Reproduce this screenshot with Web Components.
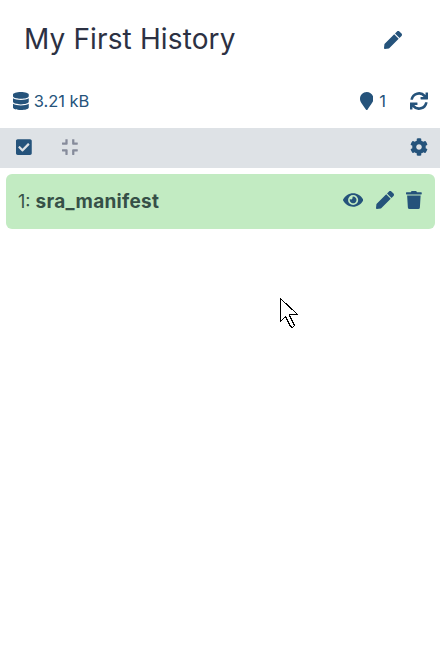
<!DOCTYPE html>
<html lang="en"><head><meta charset="utf-8"><title>History</title>
<style>html,body{margin:0;background:#fff}body{font-family:Inter,"Liberation Sans",sans-serif;color:#25537b}</style></head>
<body><history-panel></history-panel>
<script>
const icons={
pen:[512,'M290.74 93.24l128.02 128.02-277.99 277.99-114.14 12.6C11.35 513.54-1.56 500.62.14 485.34l12.7-114.22 277.9-277.88zm207.2-19.06l-60.11-60.11c-18.75-18.75-49.16-18.75-67.91 0l-56.55 56.55 128.02 128.02 56.55-56.55c18.75-18.76 18.75-49.16 0-67.91z'],
database:[448,'M448 73.143v45.714C448 159.143 347.667 192 224 192S0 159.143 0 118.857V73.143C0 32.857 100.333 0 224 0s224 32.857 224 73.143zM448 176v102.857C448 319.143 347.667 352 224 352S0 319.143 0 278.857V176c48.125 33.143 136.208 48.572 224 48.572S399.874 209.143 448 176zm0 160v102.857C448 479.143 347.667 512 224 512S0 479.143 0 438.857V336c48.125 33.143 136.208 48.572 224 48.572S399.874 369.143 448 336z'],
marker:[384,'M172.268 501.67C26.97 291.031 0 269.413 0 192 0 85.961 85.961 0 192 0s192 85.961 192 192c0 77.413-26.97 99.031-172.268 309.67-9.535 13.774-29.93 13.773-39.464 0z'],
sync:[512,'M500 12h-46c-7 0-12 5-12 12v63A247 247 0 0 0 12 207c-1 7 4 14 12 14h49c6 0 11-4 12-10A175 175 0 0 1 389 142l-77-3c-7 0-12 5-12 12v49c0 7 5 12 12 12h188c7 0 12-5 12-12V24c0-7-5-12-12-12zM12 500h46c7 0 12-5 12-12v-63A247 247 0 0 0 500 305c1-7-4-14-12-14h-49c-6 0-11 4-12 10A175 175 0 0 1 123 370l77 3c7 0 12-5 12-12v-49c0-7-5-12-12-12H12c-7 0-12 5-12 12v176c0 7 5 12 12 12z'],
check:[448,'M400 480H48c-26.51 0-48-21.49-48-48V80c0-26.51 21.49-48 48-48h352c26.51 0 48 21.49 48 48v352c0 26.51-21.49 48-48 48zm-204.686-98.059l184-184c6.248-6.248 6.248-16.379 0-22.627l-22.627-22.627c-6.248-6.248-16.379-6.249-22.628 0L184 302.745l-70.059-70.059c-6.248-6.248-16.379-6.248-22.628 0l-22.627 22.627c-6.248 6.248-6.248 16.379 0 22.627l104 104c6.249 6.25 16.379 6.25 22.628.001z'],
compress:[448,'M436 192H312c-13.300 0-24-10.700-24-24V44c0-6.600 5.400-12 12-12h40c6.600 0 12 5.400 12 12v84h84c6.600 0 12 5.400 12 12v40c0 6.600-5.400 12-12 12zm-276-24V44c0-6.600-5.400-12-12-12h-40c-6.600 0-12 5.400-12 12v84H12c-6.600 0-12 5.400-12 12v40c0 6.600 5.400 12 12 12h124c13.300 0 24-10.700 24-24zm0 300V344c0-13.300-10.700-24-24-24H12c-6.600 0-12 5.400-12 12v40c0 6.600 5.400 12 12 12h84v84c0 6.600 5.400 12 12 12h40c6.600 0 12-5.400 12-12zm192 0v-84h84c6.600 0 12-5.400 12-12v-40c0-6.600-5.400-12-12-12H312c-13.300 0-24 10.700-24 24v124c0 6.600 5.400 12 12 12h40c6.600 0 12-5.400 12-12z'],
cog:[512,'M487.4 315.7l-42.6-24.600c4.300-23.200 4.300-47 0-70.200l42.600-24.600c4.900-2.800 7.100-8.600 5.500-14-11.100-35.600-30-67.800-54.700-94.600-3.800-4.100-10-5.100-14.800-2.300L380.800 110c-17.900-15.400-38.500-27.300-60.800-35.100V25.800c0-5.600-3.900-10.500-9.400-11.700-36.700-8.200-74.300-7.800-109.200 0-5.500 1.200-9.400 6.100-9.400 11.700V75c-22.200 7.900-42.800 19.800-60.800 35.100L88.700 85.500c-4.900-2.800-11-1.900-14.800 2.300-24.700 26.700-43.600 58.900-54.700 94.600-1.700 5.400.6 11.200 5.500 14L67.300 221c-4.300 23.200-4.300 47 0 70.200l-42.600 24.600c-4.900 2.800-7.100 8.600-5.500 14 11.100 35.600 30 67.800 54.700 94.600 3.800 4.100 10 5.100 14.800 2.300l42.600-24.600c17.900 15.400 38.500 27.300 60.800 35.100v49.200c0 5.600 3.900 10.500 9.400 11.700 36.700 8.200 74.300 7.800 109.200 0 5.500-1.200 9.400-6.100 9.400-11.700v-49.200c22.200-7.900 42.800-19.800 60.800-35.100l42.600 24.600c4.900 2.800 11 1.900 14.800-2.300 24.700-26.700 43.600-58.900 54.700-94.600 1.500-5.500-.7-11.300-5.600-14.100zM256 336c-44.100 0-80-35.900-80-80s35.900-80 80-80 80 35.900 80 80-35.900 80-80 80z'],
eye:[576,'M572.520 241.400C518.290 135.590 410.930 64 288 64S57.680 135.640 3.480 241.410a32.350 32.350 0 0 0 0 29.190C57.710 376.410 165.070 448 288 448s230.320-71.640 284.520-177.410a32.350 32.350 0 0 0 0-29.190zM288 400a144 144 0 1 1 144-144 143.930 143.930 0 0 1-144 144zm0-240a95.310 95.310 0 0 0-25.310 3.790 47.850 47.850 0 0 1-66.900 66.900A95.780 95.780 0 1 0 288 160z'],
trash:[448,'M432 32H312l-9.400-18.700A24 24 0 0 0 281.100 0H166.800a23.720 23.720 0 0 0-21.400 13.300L136 32H16A16 16 0 0 0 0 48v32a16 16 0 0 0 16 16h416a16 16 0 0 0 16-16V48a16 16 0 0 0-16-16zM32 128l21.200 339a48 48 0 0 0 47.900 45h245.800a48 48 0 0 0 47.900-45L416 128z']
};
const define=(name,html)=>customElements.define(name,class extends HTMLElement{constructor(){super();this.attachShadow({mode:'open'}).innerHTML=html}});
customElements.define('ui-icon',class extends HTMLElement{connectedCallback(){const [w,d]=icons[this.getAttribute('name')];
this.attachShadow({mode:'open'}).innerHTML=`<style>:host{display:block;flex:none}svg{display:block;height:18px;width:${w*18/512}px;fill:currentColor}</style><svg viewBox="0 0 ${w} 512"><path d="${d}"/></svg>`}});
define('history-title',`<style>:host{display:flex;height:80px;box-sizing:border-box;padding:0 38px 2px 24px;align-items:center;justify-content:space-between}h1{margin:0;font-size:28px;line-height:36px;font-weight:400;color:#2c3143;letter-spacing:.13px;white-space:nowrap}ui-icon{margin-top:2px}</style><h1><slot></slot></h1><ui-icon name="pen"></ui-icon>`);
define('history-stats',`<style>:host{display:flex;height:48px;box-sizing:border-box;padding:0 12px 6px 13px;align-items:center;font-size:16.5px;line-height:20px}.size{margin-left:5px;letter-spacing:-.03px}.push{margin-left:auto}.count{margin:0 24px 0 6px}</style><ui-icon name="database"></ui-icon><span class="size"><slot></slot></span><ui-icon class="push" name="marker"></ui-icon><span class="count"><slot name="count"></slot></span><ui-icon name="sync"></ui-icon>`);
define('history-toolbar',`<style>:host{display:flex;height:40px;box-sizing:border-box;padding:0 12px 2px 16px;align-items:center;background:#dee2e6}.compress{margin-left:30px;color:#868b9b}.cog{margin-left:auto}</style><ui-icon name="check"></ui-icon><ui-icon class="compress" name="compress"></ui-icon><ui-icon class="cog" name="cog"></ui-icon>`);
define('dataset-item',`<style>:host{display:flex;height:55px;box-sizing:border-box;margin:6px 5px 0 6px;padding:0 13px 3px 12px;align-items:center;background:#c2ebc2;border-radius:6px}.name{font-size:18px;line-height:24px;color:#365047;margin-right:auto;white-space:nowrap;padding-top:3px}b{font-size:19px;font-weight:700;letter-spacing:.28px}.actions{display:flex;gap:12px}.eye{margin-right:1px}</style><span class="name"><slot name="number"></slot> <b><slot></slot></b></span><span class="actions"><ui-icon class="eye" name="eye"></ui-icon><ui-icon name="pen"></ui-icon><ui-icon name="trash"></ui-icon></span>`);
define('mouse-pointer',`<style>:host{position:absolute;left:280px;top:298px}svg{display:block}</style><svg width="19" height="31"><path d="M.5.500V23.500L5.500 18.500 10.500 28.500 12.500 29.500 14.500 27.500 9.500 17.500V16.500H17.500Z" fill="#fff" stroke="#000" stroke-width="1" shape-rendering="crispEdges"/></svg>`);
define('history-panel',`<style>:host{display:block;position:relative;width:440px;height:668px;background:#fff;overflow:hidden}</style><history-title>My First History</history-title><history-stats>3.21 kB<span slot="count">1</span></history-stats><history-toolbar></history-toolbar><dataset-item><span slot="number">1:</span>sra_manifest</dataset-item><mouse-pointer></mouse-pointer>`);
</script></body></html>
